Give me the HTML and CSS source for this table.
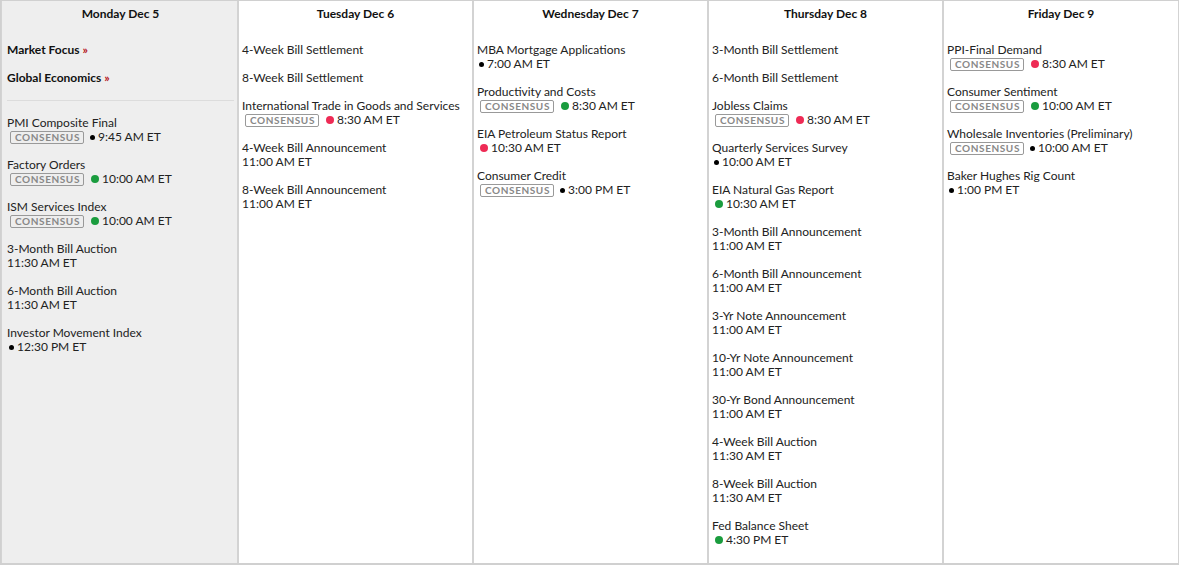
FILE: index.html
```html
<!DOCTYPE html>
<html>
<head>
<meta charset="utf-8">
<link rel="stylesheet" href="styles.css">
</head>
<body>
<div class="week">
  <div class="day today">
    <div class="day-head">Monday Dec 5</div>
    <div class="links">
      <div class="link">Market Focus <span class="arr">»</span></div>
      <div class="link">Global Economics <span class="arr">»</span></div>
    </div>
    <div class="events">
      <div class="ev"><div class="name">PMI Composite Final</div><div class="meta"><span class="cons">CONSENSUS</span><span class="dot sm"></span>9:45 AM ET</div></div>
      <div class="ev"><div class="name">Factory Orders</div><div class="meta"><span class="cons">CONSENSUS</span><span class="dot green"></span>10:00 AM ET</div></div>
      <div class="ev"><div class="name">ISM Services Index</div><div class="meta"><span class="cons">CONSENSUS</span><span class="dot green"></span>10:00 AM ET</div></div>
      <div class="ev"><div class="name">3-Month Bill Auction</div><div class="meta">11:30 AM ET</div></div>
      <div class="ev"><div class="name">6-Month Bill Auction</div><div class="meta">11:30 AM ET</div></div>
      <div class="ev"><div class="name">Investor Movement Index</div><div class="meta"><span class="dot sm"></span>12:30 PM ET</div></div>
    </div>
  </div>
  <div class="day">
    <div class="day-head">Tuesday Dec 6</div>
    <div class="events">
      <div class="ev"><div class="name">4-Week Bill Settlement</div></div>
      <div class="ev"><div class="name">8-Week Bill Settlement</div></div>
      <div class="ev"><div class="name">International Trade in Goods and Services</div><div class="meta"><span class="cons">CONSENSUS</span><span class="dot red"></span>8:30 AM ET</div></div>
      <div class="ev"><div class="name">4-Week Bill Announcement</div><div class="meta">11:00 AM ET</div></div>
      <div class="ev"><div class="name">8-Week Bill Announcement</div><div class="meta">11:00 AM ET</div></div>
    </div>
  </div>
  <div class="day">
    <div class="day-head">Wednesday Dec 7</div>
    <div class="events">
      <div class="ev"><div class="name">MBA Mortgage Applications</div><div class="meta"><span class="dot sm"></span>7:00 AM ET</div></div>
      <div class="ev"><div class="name">Productivity and Costs</div><div class="meta"><span class="cons">CONSENSUS</span><span class="dot green"></span>8:30 AM ET</div></div>
      <div class="ev"><div class="name">EIA Petroleum Status Report</div><div class="meta"><span class="dot red"></span>10:30 AM ET</div></div>
      <div class="ev"><div class="name">Consumer Credit</div><div class="meta"><span class="cons">CONSENSUS</span><span class="dot sm"></span>3:00 PM ET</div></div>
    </div>
  </div>
  <div class="day">
    <div class="day-head">Thursday Dec 8</div>
    <div class="events">
      <div class="ev"><div class="name">3-Month Bill Settlement</div></div>
      <div class="ev"><div class="name">6-Month Bill Settlement</div></div>
      <div class="ev"><div class="name">Jobless Claims</div><div class="meta"><span class="cons">CONSENSUS</span><span class="dot red"></span>8:30 AM ET</div></div>
      <div class="ev"><div class="name">Quarterly Services Survey</div><div class="meta"><span class="dot sm"></span>10:00 AM ET</div></div>
      <div class="ev"><div class="name">EIA Natural Gas Report</div><div class="meta"><span class="dot green"></span>10:30 AM ET</div></div>
      <div class="ev"><div class="name">3-Month Bill Announcement</div><div class="meta">11:00 AM ET</div></div>
      <div class="ev"><div class="name">6-Month Bill Announcement</div><div class="meta">11:00 AM ET</div></div>
      <div class="ev"><div class="name">3-Yr Note Announcement</div><div class="meta">11:00 AM ET</div></div>
      <div class="ev"><div class="name">10-Yr Note Announcement</div><div class="meta">11:00 AM ET</div></div>
      <div class="ev"><div class="name">30-Yr Bond Announcement</div><div class="meta">11:00 AM ET</div></div>
      <div class="ev"><div class="name">4-Week Bill Auction</div><div class="meta">11:30 AM ET</div></div>
      <div class="ev"><div class="name">8-Week Bill Auction</div><div class="meta">11:30 AM ET</div></div>
      <div class="ev"><div class="name">Fed Balance Sheet</div><div class="meta"><span class="dot green"></span>4:30 PM ET</div></div>
    </div>
  </div>
  <div class="day">
    <div class="day-head">Friday Dec 9</div>
    <div class="events">
      <div class="ev"><div class="name">PPI-Final Demand</div><div class="meta"><span class="cons">CONSENSUS</span><span class="dot red"></span>8:30 AM ET</div></div>
      <div class="ev"><div class="name">Consumer Sentiment</div><div class="meta"><span class="cons">CONSENSUS</span><span class="dot green"></span>10:00 AM ET</div></div>
      <div class="ev"><div class="name">Wholesale Inventories (Preliminary)</div><div class="meta"><span class="cons">CONSENSUS</span><span class="dot sm"></span>10:00 AM ET</div></div>
      <div class="ev"><div class="name">Baker Hughes Rig Count</div><div class="meta"><span class="dot sm"></span>1:00 PM ET</div></div>
    </div>
  </div>
</div>
</body>
</html>
```

FILE: styles.css
```css
html, body {
  margin: 0;
  padding: 0;
  background: #fff;
}
body {
  font-family: "Lato", "Liberation Sans", sans-serif;
  font-size: 12px;
  color: #222;
}
.week {
  display: grid;
  grid-template-columns: 238px 235px 235px 235px 235px;
  width: 1179px;
  height: 565px;
  box-sizing: border-box;
  border: 1px solid #d0d0d0;
  border-bottom: 2px solid #d0d0d0;
}
.day {
  border-right: 2px solid #d3d3d3;
  padding: 0 3px;
  box-sizing: border-box;
}
.day:last-child {
  border-right: 1px solid #d3d3d3;
}
.today {
  background: #eeeeee;
  border-left: 1px solid #d3d3d3;
  padding-left: 5px;
}
.day-head {
  font-weight: 700;
  text-align: center;
  line-height: 14px;
  padding-top: 6px;
  height: 42px;
  box-sizing: border-box;
  color: #111;
}
.links {
  border-bottom: 1px solid #dcdcdc;
  margin-bottom: 15px;
  padding-bottom: 15px;
}
.link {
  font-weight: 700;
  line-height: 14px;
  margin-bottom: 14px;
  color: #111;
}
.link:last-child {
  margin-bottom: 0;
}
.arr {
  color: #b5121b;
}
.ev {
  line-height: 14px;
  margin-bottom: 14px;
}
.name {
  white-space: nowrap;
}
.meta {
  display: flex;
  align-items: center;
  white-space: nowrap;
}
.cons {
  display: inline-block;
  border: 1px solid #999;
  border-radius: 2px;
  color: #888;
  font-size: 10px;
  font-weight: 700;
  letter-spacing: 0.6px;
  line-height: 11px;
  padding: 0 3px 0 4px;
  margin-left: 3px;
  margin-right: 4px;
}
.dot {
  display: inline-block;
  width: 8px;
  height: 8px;
  border-radius: 50%;
  margin-right: 3px;
  margin-left: 3px;
}
.dot.sm {
  width: 5px;
  height: 5px;
  background: #000;
  margin-left: 2px;
  margin-right: 3px;
}
.dot.green {
  background: #1a9c3e;
}
.dot.red {
  background: #ee2b55;
}
```
